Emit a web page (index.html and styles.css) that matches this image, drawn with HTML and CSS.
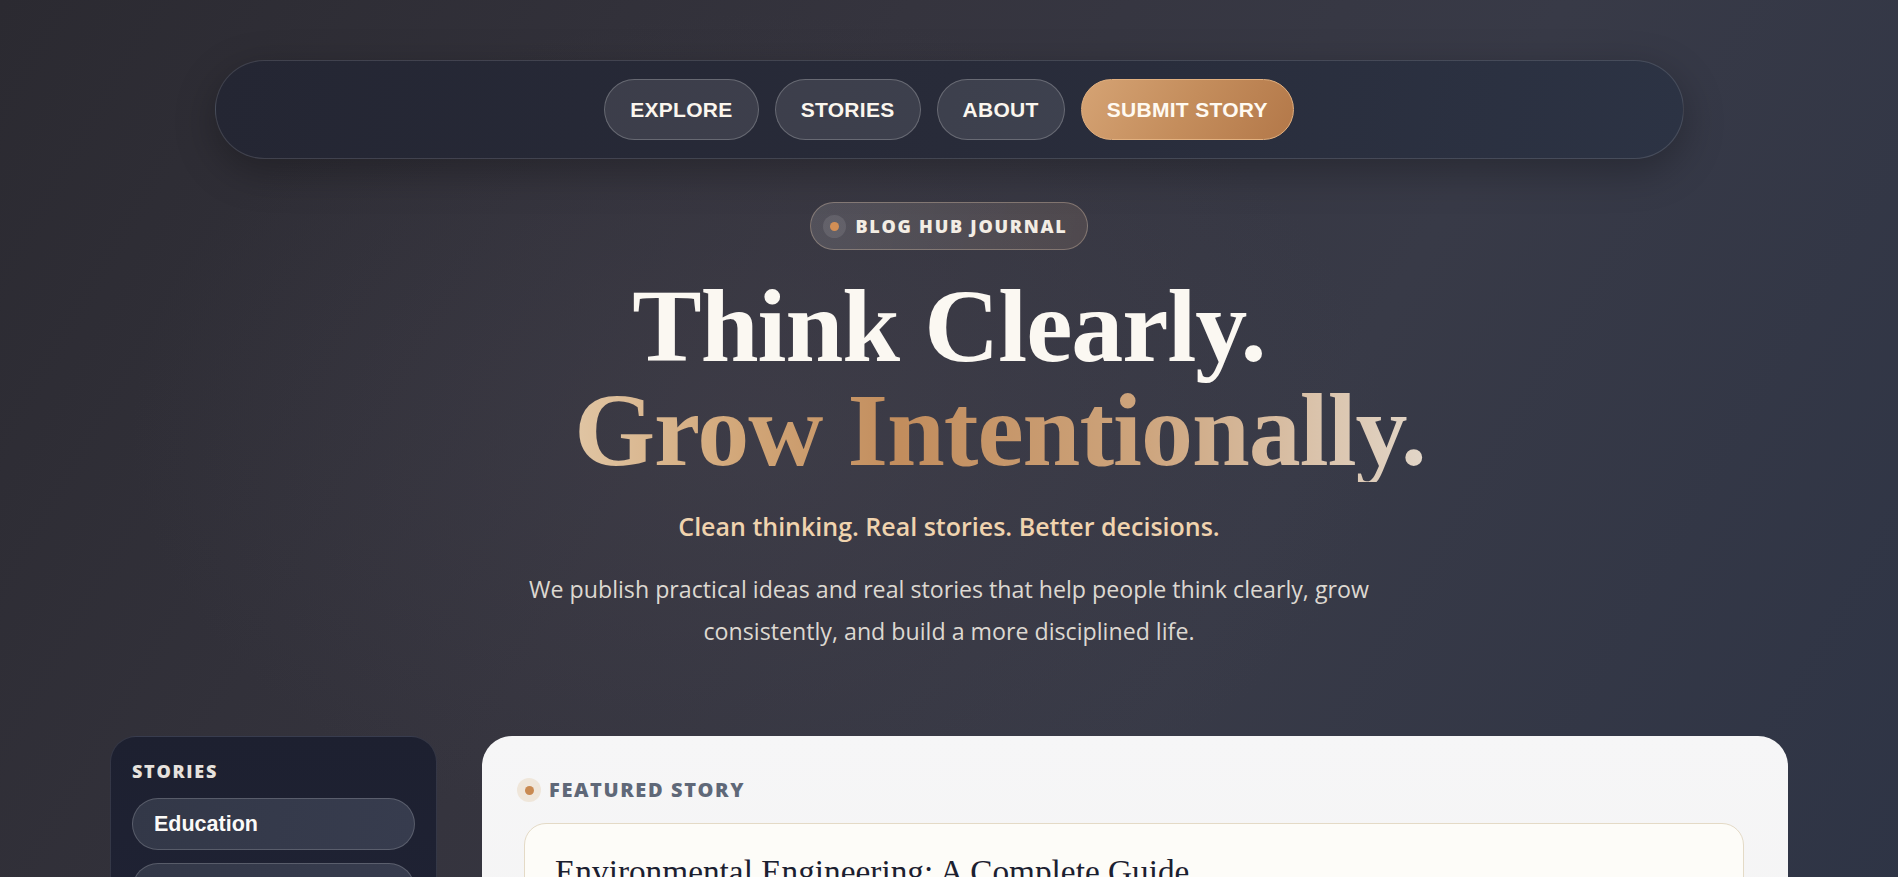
FILE: index.html
```html
<!DOCTYPE html>
<html lang="en">
<head>
<meta charset="utf-8">
<title>Blog Hub Journal</title>
<link rel="stylesheet" href="styles.css">
</head>
<body>
<div class="page">
  <header class="topbar">
    <nav class="nav">
      <a class="nav-btn" href="#">EXPLORE</a>
      <a class="nav-btn" href="#">STORIES</a>
      <a class="nav-btn" href="#">ABOUT</a>
      <a class="nav-btn nav-cta" href="#">SUBMIT STORY</a>
    </nav>
  </header>

  <section class="hero">
    <div class="badge"><span class="badge-dot"><span></span></span>BLOG HUB JOURNAL</div>
    <h1 class="hero-title">
      <span class="line-one">Think Clearly.</span>
      <span class="line-two">Grow Intentionally.</span>
    </h1>
    <p class="tagline">Clean thinking. Real stories. Better decisions.</p>
    <p class="intro">We publish practical ideas and real stories that help people think clearly, grow consistently, and build a more disciplined life.</p>
  </section>

  <main class="content">
    <aside class="sidebar">
      <h2 class="side-label">STORIES</h2>
      <a class="side-btn" href="#">Education</a>
      <a class="side-btn" href="#">Technology</a>
    </aside>
    <section class="featured">
      <div class="feat-label"><span class="feat-dot"><span></span></span>FEATURED STORY</div>
      <article class="story">
        <h3 class="story-title">Environmental Engineering: A Complete Guide</h3>
      </article>
    </section>
  </main>
</div>
</body>
</html>
```

FILE: styles.css
```css
* { box-sizing: border-box; }
html, body { margin: 0; padding: 0; }
body {
  min-height: 100vh;
  background:
    radial-gradient(ellipse 900px 600px at 40% 35%, rgba(70, 68, 80, 0.45), rgba(70, 68, 80, 0) 70%),
    linear-gradient(120deg, #2b2a31 0%, #35343e 35%, #383a47 60%, #2c3345 100%);
  color: #fff;
  font-family: "Open Sans", "Noto Sans", sans-serif;
  overflow: hidden;
}
.page { min-height: 877px; }

.topbar {
  display: flex;
  justify-content: center;
  padding-top: 60px;
}
.nav {
  width: 1469px;
  height: 99px;
  border-radius: 50px;
  border: 1px solid rgba(255, 255, 255, 0.13);
  background: linear-gradient(100deg, #242633 0%, #282b39 50%, #2c3344 100%);
  box-shadow: 0 12px 40px rgba(0, 0, 0, 0.28);
  display: flex;
  align-items: center;
  justify-content: center;
  gap: 16px;
}
.nav-btn {
  display: inline-flex;
  align-items: center;
  justify-content: center;
  height: 61px;
  padding: 0 25px;
  border-radius: 31px;
  border: 1px solid rgba(255, 255, 255, 0.22);
  background: rgba(255, 255, 255, 0.1);
  color: #fbf6ee;
  font-family: "Liberation Sans", Arial, sans-serif;
  font-weight: 700;
  font-size: 21px;
  letter-spacing: 0.3px;
  text-decoration: none;
}
.nav-cta {
  background: linear-gradient(120deg, #d5a374 0%, #c48d5c 50%, #b37849 100%);
  border-color: #e2b07f;
  color: #fffaf2;
}

.hero {
  display: flex;
  flex-direction: column;
  align-items: center;
  text-align: center;
  padding-top: 43px;
}
.badge {
  display: inline-flex;
  align-items: center;
  gap: 9px;
  height: 48px;
  padding: 0 19px 0 12px;
  border-radius: 24px;
  border: 1px solid rgba(225, 200, 175, 0.35);
  background: linear-gradient(100deg, rgba(255, 255, 255, 0.13) 0%, rgba(200, 160, 130, 0.16) 100%);
  color: #f3ede4;
  font-family: "Open Sans", sans-serif;
  font-weight: 800;
  font-size: 18px;
  letter-spacing: 1.75px;
}
.badge-dot {
  width: 23px;
  height: 23px;
  border-radius: 50%;
  background: rgba(255, 255, 255, 0.1);
  display: inline-flex;
  align-items: center;
  justify-content: center;
}
.badge-dot span {
  width: 9px;
  height: 9px;
  border-radius: 50%;
  background: #d38f55;
}

.hero-title {
  margin: 24px 0 0;
  font-family: "Liberation Serif", "Times New Roman", serif;
  font-weight: 700;
  font-size: 104px;
  line-height: 104px;
  letter-spacing: -1px;
}
.line-one {
  display: block;
  color: #fbf8f2;
}
.line-two {
  display: block;
  padding-left: 102px;
  background: linear-gradient(90deg, #e9d8be 0%, #d2a779 28%, #c28d5d 45%, #cda47c 70%, #e2d6c8 100%);
  -webkit-background-clip: text;
  background-clip: text;
  color: transparent;
}

.tagline {
  margin: 27px 0 0;
  color: #f0d3ae;
  font-family: "Open Sans", sans-serif;
  font-weight: 600;
  font-size: 25px;
  line-height: 34px;
}
.intro {
  margin: 25px 0 0;
  max-width: 900px;
  color: #ddd8d1;
  font-family: "Open Sans", sans-serif;
  font-size: 23.2px;
  line-height: 42px;
}

.content {
  display: grid;
  grid-template-columns: 327px 1fr;
  gap: 45px;
  padding: 0 110px;
  margin-top: 84px;
}
.sidebar {
  border-radius: 26px;
  border: 1px solid rgba(255, 255, 255, 0.1);
  background: linear-gradient(180deg, #1d2030 0%, #22263a 100%);
  padding: 22px 21px;
  display: flex;
  flex-direction: column;
  gap: 13px;
  min-height: 400px;
}
.side-label {
  margin: 0 0 2px;
  color: #e6e2de;
  font-family: "Open Sans", sans-serif;
  font-weight: 800;
  font-size: 18px;
  letter-spacing: 1.7px;
  line-height: 24px;
}
.side-btn {
  display: flex;
  align-items: center;
  height: 52px;
  padding: 0 21px;
  border-radius: 26px;
  border: 1px solid rgba(255, 255, 255, 0.18);
  background: linear-gradient(100deg, #333848 0%, #373c4e 100%);
  color: #fbfaf8;
  font-family: "Liberation Sans", Arial, sans-serif;
  font-weight: 700;
  font-size: 21.5px;
  text-decoration: none;
}

.featured {
  border-radius: 30px;
  background: linear-gradient(180deg, #f6f6f7 0%, #f3f2f1 100%);
  padding: 40px 44px 40px 42px;
  min-height: 500px;
}
.feat-label {
  display: flex;
  align-items: center;
  gap: 8px;
  margin-left: -7px;
  color: #5f6878;
  font-family: "Open Sans", sans-serif;
  font-weight: 800;
  font-size: 20px;
  letter-spacing: 1.6px;
  line-height: 28px;
}
.feat-dot {
  width: 24px;
  height: 24px;
  border-radius: 50%;
  background: #efe6da;
  display: inline-flex;
  align-items: center;
  justify-content: center;
}
.feat-dot span {
  width: 9px;
  height: 9px;
  border-radius: 50%;
  background: #c98a52;
}
.story {
  margin-top: 19px;
  border-radius: 22px;
  border: 1px solid #e4dac6;
  background: #fdfcf8;
  padding: 28px 30px;
}
.story-title {
  margin: 0;
  color: #1b2030;
  font-family: "Liberation Serif", "Times New Roman", serif;
  font-weight: 400;
  font-size: 33.3px;
  line-height: 40px;
}
```
